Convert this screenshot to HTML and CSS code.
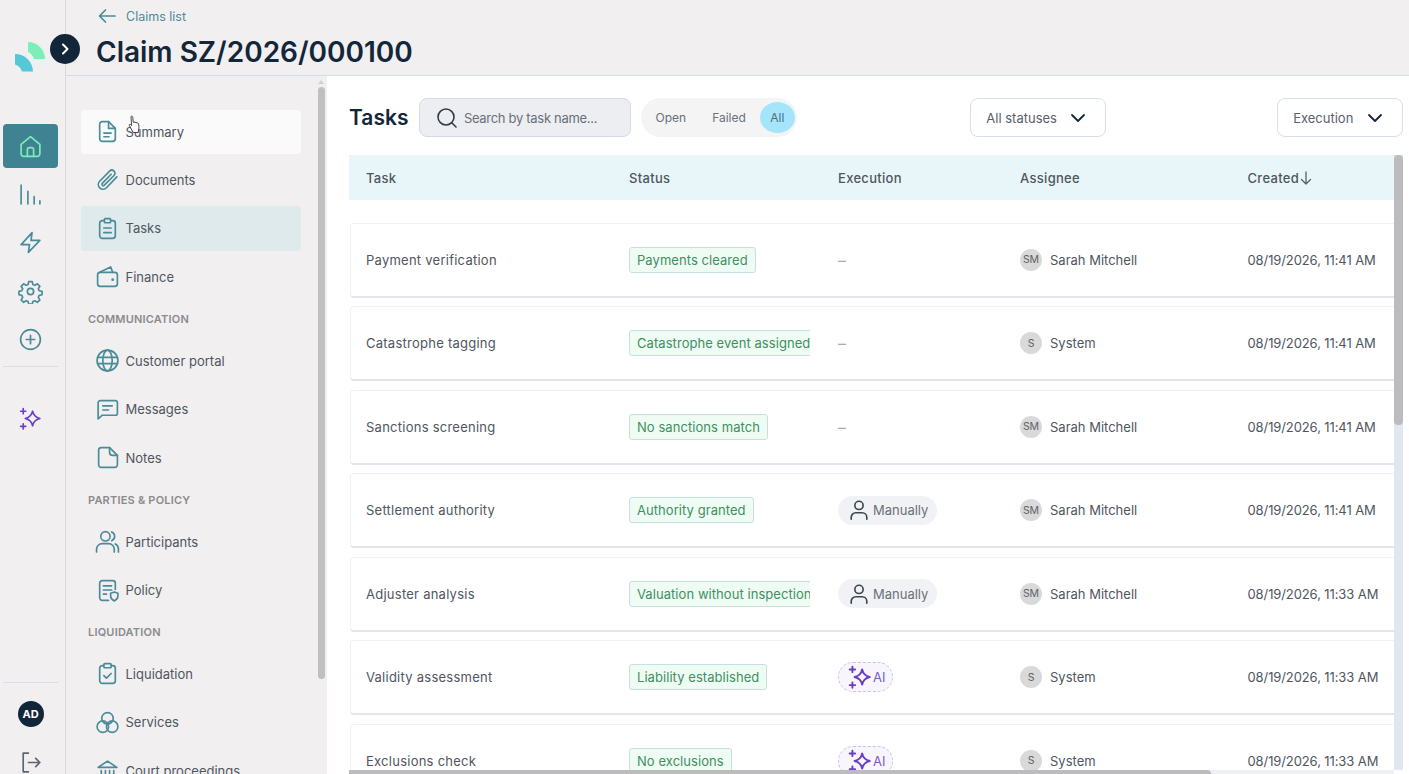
FILE: index.html
```html
<!DOCTYPE html>
<html lang="en">
<head>
    <meta charset="UTF-8">
    <meta name="viewport" content="width=device-width, initial-scale=1.0">
    <title>Claim SZ/2026/000100</title>
    <link rel="stylesheet" href="styles.css">
</head>
<body>

<!-- Icon rail -->
<aside class="rail">
    <div class="logo">
        <svg width="32" height="32" viewBox="0 0 32 32">
            <path fill="#7eeeb8" d="M13 1A17 17 0 0 1 30 18H19C18 15 16 12 13 11Z"/>
            <path fill="#55c8d8" d="M0 13A18 18 0 0 1 18 30.500H7C6 27 3 24.500 0 23.500Z"/>
        </svg>
    </div>
    <a class="rail-item active" href="#">
        <svg class="ico" viewBox="0 0 24 24"><path d="M3 10 12 2.500 21 10v9a2.500 2.500 0 0 1-2.500 2.500h-13A2.500 2.500 0 0 1 3 19Z"/><path d="M9 21.500V15a2 2 0 0 1 2-2h2a2 2 0 0 1 2 2v6.500"/></svg>
    </a>
    <a class="rail-item" href="#">
        <svg class="ico" viewBox="0 0 24 24"><path d="M3 3v18M9.500 9v12M15.500 14v7M21 18v3"/></svg>
    </a>
    <a class="rail-item" href="#">
        <svg class="ico" viewBox="0 0 24 24"><path d="M13.500 2.500 3 14h8l-1 7.500L21 10h-8.500Z"/></svg>
    </a>
    <a class="rail-item" href="#">
        <svg class="ico" viewBox="0 0 24 24"><circle cx="12" cy="12" r="3"/><path d="M10.300 2.500h3.400l.6 2.800 1.900.8 2.400-1.500 2.400 2.400-1.500 2.400.8 1.900 2.800.6v3.200l-2.800.6-.8 1.900 1.500 2.400-2.400 2.400-2.400-1.500-1.900.8-.6 2.300h-3.400l-.6-2.300-1.900-.8-2.400 1.500-2.400-2.400 1.500-2.400-.8-1.900-2.800-.6v-3.200l2.800-.6.8-1.900-1.500-2.400 2.400-2.400 2.400 1.500 1.900-.8Z"/></svg>
    </a>
    <a class="rail-item" href="#">
        <svg class="ico" viewBox="0 0 24 24"><circle cx="12" cy="12" r="9.500"/><path d="M12 8v8M8 12h8"/></svg>
    </a>
    <div class="rail-line"></div>
    <a class="rail-item ai" href="#">
        <svg class="ico purple" viewBox="0 0 24 24"><path d="M14 5c.8 4 2.600 6 7 7-4.400 1-6.200 3-7 7-.8-4-2.600-6-7-7 4.400-1 6.200-3 7-7Z"/><path d="M5 2.500v5M2.500 5h5M5 17v5M2.500 19.500h5"/></svg>
    </a>
    <div class="rail-bottom">
        <div class="rail-line"></div>
        <div class="avatar-me">AD</div>
        <a class="rail-item logout" href="#">
            <svg class="ico grey" viewBox="0 0 24 24"><path d="M10 3H5v18h5M10 12h11M17 8l4 4-4 4"/></svg>
        </a>
    </div>
</aside>

<button class="rail-toggle">
    <svg width="14" height="14" viewBox="0 0 14 14"><path d="M5 2.500 9.500 7 5 11.500"/></svg>
</button>

<div class="main">
    <header class="top">
        <a class="back" href="#">
            <svg width="20" height="16" viewBox="0 0 20 16"><path d="M18 8H3M8.500 2 2.500 8l6 6"/></svg>
            Claims list
        </a>
        <h1>Claim SZ/2026/000100</h1>
    </header>

    <div class="body-row">
        <!-- Section menu -->
        <nav class="menu">
            <a class="menu-item hover" href="#">
                <svg class="ico" viewBox="0 0 24 24"><path d="M13 2.500H7a2.500 2.500 0 0 0-2.500 2.500v14A2.500 2.500 0 0 0 7 21.500h10a2.500 2.500 0 0 0 2.500-2.500V9Z"/><path d="M13 2.500V9h6.500M8.500 13.500h7M8.500 17h5"/></svg>
                Summary
            </a>
            <a class="menu-item" href="#">
                <svg class="ico" viewBox="0 0 24 24"><path d="M21 8.500 11 19a4.500 4.500 0 0 1-6.500-6.300L14 3a3 3 0 0 1 4.300 4.200L9 16.500a1.300 1.300 0 0 1-2-1.800L15.500 6"/></svg>
                Documents
            </a>
            <a class="menu-item current" href="#">
                <svg class="ico" viewBox="0 0 24 24"><path d="M9 4.500H7A2.500 2.500 0 0 0 4.500 7v12A2.500 2.500 0 0 0 7 21.500h10a2.500 2.500 0 0 0 2.500-2.500V7A2.500 2.500 0 0 0 17 4.500h-2"/><rect x="9" y="2.500" width="6" height="4" rx="1"/><path d="M8.500 11.500h7M8.500 16h7"/></svg>
                Tasks
            </a>
            <a class="menu-item" href="#">
                <svg class="ico" viewBox="0 0 24 24"><path d="M4.500 8 15 2.800 17 8"/><rect x="2.500" y="8" width="19" height="13.500" rx="2.500"/><circle cx="17" cy="15" r=".6"/></svg>
                Finance
            </a>
            <div class="menu-label">COMMUNICATION</div>
            <a class="menu-item" href="#">
                <svg class="ico" viewBox="0 0 24 24"><circle cx="12" cy="12" r="10"/><ellipse cx="12" cy="12" rx="4.500" ry="10"/><path d="M2.500 9h19M2.500 15h19"/></svg>
                Customer portal
            </a>
            <a class="menu-item" href="#">
                <svg class="ico" viewBox="0 0 24 24"><path d="M5 3.500h14.500A2 2 0 0 1 21.500 5.500v10a2 2 0 0 1-2 2H7L3 21V5.500a2 2 0 0 1 2-2Z"/><path d="M7.500 8.500h9M7.500 12.500h5.500"/></svg>
                Messages
            </a>
            <a class="menu-item" href="#">
                <svg class="ico" viewBox="0 0 24 24"><path d="M6 2.500h8L21.500 10v9a2.500 2.500 0 0 1-2.500 2.500H6A2.500 2.500 0 0 1 3.500 19V5A2.500 2.500 0 0 1 6 2.500Z"/><path d="M14 2.500V7a3 3 0 0 0 3 3h4.500"/></svg>
                Notes
            </a>
            <div class="menu-label">PARTIES &amp; POLICY</div>
            <a class="menu-item" href="#">
                <svg class="ico" viewBox="0 0 24 24"><circle cx="10" cy="7" r="4.500"/><path d="M1.500 22v-2.500A5.500 5.500 0 0 1 7 14h6a5.500 5.500 0 0 1 5.500 5.500V22M16 2.800a4.500 4.500 0 0 1 0 8.400M19.500 14.300a5.500 5.500 0 0 1 3 5V22"/></svg>
                Participants
            </a>
            <a class="menu-item" href="#">
                <svg class="ico" viewBox="0 0 24 24"><path d="M19.500 11V5A2.500 2.500 0 0 0 17 2.500H7A2.500 2.500 0 0 0 4.500 5v14A2.500 2.500 0 0 0 7 21.500h6"/><path d="M8 7.500h8M8 11.500h8M8 15.500h3"/><path d="M18.500 13.500l3.500 1.200v2.800c0 2-1.500 3.500-3.500 4.500-2-1-3.500-2.500-3.500-4.500v-2.800Z"/></svg>
                Policy
            </a>
            <div class="menu-label">LIQUIDATION</div>
            <a class="menu-item" href="#">
                <svg class="ico" viewBox="0 0 24 24"><path d="M8.500 4.500H7A2.500 2.500 0 0 0 4.500 7v12A2.500 2.500 0 0 0 7 21.500h10a2.500 2.500 0 0 0 2.500-2.500V7A2.500 2.500 0 0 0 17 4.500h-1.500"/><rect x="8.500" y="2.500" width="7" height="4" rx="1"/><path d="m8.500 14 2.500 2.500 4.500-4.500"/></svg>
                Liquidation
            </a>
            <a class="menu-item" href="#">
                <svg class="ico" viewBox="0 0 24 24"><circle cx="12" cy="8" r="5.500"/><circle cx="7.500" cy="16" r="5.500"/><circle cx="16.500" cy="16" r="5.500"/></svg>
                Services
            </a>
            <a class="menu-item" href="#">
                <svg class="ico" viewBox="0 0 24 24"><path d="M3 9 12 3l9 6ZM3 21.500h18M6 12v6M10 12v6M14 12v6M18 12v6"/></svg>
                Court proceedings
            </a>
            <div class="menu-arrow"></div>
            <div class="menu-thumb"></div>
            <!-- mouse pointer in the recording -->
            <svg class="pointer" width="14" height="20" viewBox="0 0 14 20"><path fill="#fff" stroke="#333" stroke-width=".9" d="M3 1.500c.8-.8 1.700 0 1.800.8l.4 5 .8-.2 1 .1 1 .3 1.100.3 1.300.8c.8 1.700.6 4.300.2 6.400l-.3 2.500H5.200L1.300 10.500c-.5-1 .5-1.500 1.300-.9l1 1Z"/></svg>
        </nav>

        <!-- Tasks -->
        <section class="content">
            <div class="toolbar">
                <h2>Tasks</h2>
                <div class="search">
                    <svg width="22" height="22" viewBox="0 0 22 22"><circle cx="10" cy="10" r="8"/><path d="m16 16 4 4"/></svg>
                    <span>Search by task name...</span>
                </div>
                <div class="pills">
                    <span>Open</span>
                    <span>Failed</span>
                    <span class="on">All</span>
                </div>
                <div class="select first">All statuses
                    <svg width="16" height="16" viewBox="0 0 16 16"><path d="m2 5 6 6 6-6"/></svg>
                </div>
                <div class="select second">Execution
                    <svg width="16" height="16" viewBox="0 0 16 16"><path d="m2 5 6 6 6-6"/></svg>
                </div>
            </div>

            <div class="table-wrap">
                <div class="table-head row-grid">
                    <div>Task</div>
                    <div>Status</div>
                    <div>Execution</div>
                    <div>Assignee</div>
                    <div class="created">Created
                        <svg width="12" height="14" viewBox="0 0 12 14"><path d="M6 1v12M1.500 8.500 6 13l4.500-4.500"/></svg>
                    </div>
                </div>

                <div class="rows">
                    <div class="card row-grid">
                        <div class="task">Payment verification</div>
                        <div class="status-cell"><span class="status">Payments cleared</span></div>
                        <div class="none">–</div>
                        <div class="who"><span class="avatar">SM</span>Sarah Mitchell</div>
                        <div class="date">08/19/2026, 11:41 AM</div>
                    </div>
                    <div class="card row-grid">
                        <div class="task">Catastrophe tagging</div>
                        <div class="status-cell"><span class="status">Catastrophe event assigned</span></div>
                        <div class="none">–</div>
                        <div class="who"><span class="avatar">S</span>System</div>
                        <div class="date">08/19/2026, 11:41 AM</div>
                    </div>
                    <div class="card row-grid">
                        <div class="task">Sanctions screening</div>
                        <div class="status-cell"><span class="status">No sanctions match</span></div>
                        <div class="none">–</div>
                        <div class="who"><span class="avatar">SM</span>Sarah Mitchell</div>
                        <div class="date">08/19/2026, 11:41 AM</div>
                    </div>
                    <div class="card row-grid">
                        <div class="task">Settlement authority</div>
                        <div class="status-cell"><span class="status">Authority granted</span></div>
                        <div><span class="manual"><svg viewBox="0 0 24 24"><circle cx="12" cy="7" r="4.500"/><path d="M3.500 22v-2a5 5 0 0 1 5-5h7a5 5 0 0 1 5 5v2"/></svg>Manually</span></div>
                        <div class="who"><span class="avatar">SM</span>Sarah Mitchell</div>
                        <div class="date">08/19/2026, 11:41 AM</div>
                    </div>
                    <div class="card row-grid">
                        <div class="task">Adjuster analysis</div>
                        <div class="status-cell"><span class="status">Valuation without inspection</span></div>
                        <div><span class="manual"><svg viewBox="0 0 24 24"><circle cx="12" cy="7" r="4.500"/><path d="M3.500 22v-2a5 5 0 0 1 5-5h7a5 5 0 0 1 5 5v2"/></svg>Manually</span></div>
                        <div class="who"><span class="avatar">SM</span>Sarah Mitchell</div>
                        <div class="date">08/19/2026, 11:33 AM</div>
                    </div>
                    <div class="card row-grid">
                        <div class="task">Validity assessment</div>
                        <div class="status-cell"><span class="status">Liability established</span></div>
                        <div><span class="ai-chip"><svg viewBox="0 0 24 24"><path d="M14 5c.8 4 2.600 6 7 7-4.400 1-6.200 3-7 7-.8-4-2.600-6-7-7 4.400-1 6.200-3 7-7Z"/><path d="M5 2.500v5M2.500 5h5M5 17v5M2.500 19.500h5"/></svg>AI</span></div>
                        <div class="who"><span class="avatar">S</span>System</div>
                        <div class="date">08/19/2026, 11:33 AM</div>
                    </div>
                    <div class="card row-grid">
                        <div class="task">Exclusions check</div>
                        <div class="status-cell"><span class="status">No exclusions</span></div>
                        <div><span class="ai-chip"><svg viewBox="0 0 24 24"><path d="M14 5c.8 4 2.600 6 7 7-4.400 1-6.200 3-7 7-.8-4-2.600-6-7-7 4.400-1 6.200-3 7-7Z"/><path d="M5 2.500v5M2.500 5h5M5 17v5M2.500 19.500h5"/></svg>AI</span></div>
                        <div class="who"><span class="avatar">S</span>System</div>
                        <div class="date">08/19/2026, 11:33 AM</div>
                    </div>
                </div>

                <div class="vbar"><div class="vthumb"></div></div>
                <div class="hbar"><div class="hthumb"></div></div>
            </div>
        </section>
    </div>
</div>

</body>
</html>
```

FILE: styles.css
```css
* {
    box-sizing: border-box;
}
body {
    font-family: Inter, "Open Sans", sans-serif;
    font-size: 13px;
    margin: 0;
    height: 100vh;
    display: flex;
    overflow: hidden;
    background-color: #f1eff0;
    color: #4f5660;
}
a {
    text-decoration: none;
    color: inherit;
}
.ico {
    width: 25px;
    height: 25px;
    fill: none;
    stroke: #4a8b99;
    stroke-width: 1.6;
    stroke-linecap: round;
    stroke-linejoin: round;
    flex: none;
}
.ico.purple {
    stroke: #6a3fc8;
}
.ico.grey {
    stroke: #5b6672;
}

/* rail */
.rail {
    width: 66px;
    flex: none;
    border-right: 1px solid #d4dbe4;
    padding: 41px 7px 0 3px;
    display: flex;
    flex-direction: column;
}
.logo {
    height: 32px;
    padding-left: 12px;
    margin-bottom: 51px;
}
.rail-item {
    height: 44.4px;
    margin-bottom: 4px;
    border-radius: 4px;
    display: flex;
    align-items: center;
    justify-content: center;
}
.rail-item.active {
    background-color: #3f8291;
}
.rail-item.active .ico {
    stroke: #7eeeb8;
}
.rail-item.ai {
    margin-top: 29px;
}
.rail-line {
    height: 1px;
    margin-top: 0;
    background-color: #d9dfe6;
}
.rail-bottom {
    margin-top: auto;
    display: flex;
    flex-direction: column;
}
.avatar-me {
    width: 26px;
    height: 26px;
    border-radius: 50%;
    margin: 18px auto 14px;
    background-color: #12263a;
    color: #fff;
    font-size: 11px;
    font-weight: 700;
    display: flex;
    align-items: center;
    justify-content: center;
}
.logout {
    margin-bottom: -11px;
}
.rail-toggle {
    position: absolute;
    left: 50px;
    top: 34px;
    width: 30px;
    height: 30px;
    border: 0;
    padding: 0;
    border-radius: 50%;
    background-color: #12263a;
    display: flex;
    align-items: center;
    justify-content: center;
}
.rail-toggle svg {
    fill: none;
    stroke: #fff;
    stroke-width: 2;
    stroke-linecap: round;
    stroke-linejoin: round;
}

/* header */
.main {
    flex: 1;
    min-width: 0;
    display: flex;
    flex-direction: column;
}
.top {
    height: 76px;
    flex: none;
    border-bottom: 1px solid #d4dbe4;
    padding: 7px 0 0 30px;
}
.back {
    display: flex;
    align-items: center;
    gap: 9px;
    height: 18px;
    margin-left: 1px;
    color: #4f8b98;
    font-size: 12.5px;
}
.back svg {
    fill: none;
    stroke: #4a8b99;
    stroke-width: 1.7;
    stroke-linecap: round;
    stroke-linejoin: round;
}
.top h1 {
    margin: 9px 0 0;
    font-size: 28px;
    line-height: 36px;
    font-weight: 600;
    color: #13263a;
}

/* section menu */
.body-row {
    flex: 1;
    min-height: 0;
    display: flex;
}
.menu {
    width: 261px;
    flex: none;
    position: relative;
    overflow: hidden;
    padding: 33.500px 26px 0 15px;
    display: flex;
    flex-direction: column;
    gap: 4px;
}
.menu-item {
    height: 44.4px;
    flex: none;
    border-radius: 4px;
    padding-left: 13.500px;
    display: flex;
    align-items: center;
    gap: 6px;
}
.menu-item.hover {
    background-color: #fafafa;
}
.menu-item.current {
    background-color: #deeaec;
}
.menu-label {
    height: 31.600px;
    flex: none;
    padding-left: 7px;
    display: flex;
    align-items: center;
    font-size: 11px;
    font-weight: 600;
    letter-spacing: .2px;
    color: #8b8b8e;
}
.menu-thumb {
    position: absolute;
    left: 252px;
    top: 11px;
    width: 7px;
    height: 592px;
    border-radius: 4px;
    background-color: #c0c0c2;
}
.menu-arrow {
    position: absolute;
    left: 252px;
    top: 4px;
    border: 3.500px solid transparent;
    border-top: 0;
    border-bottom: 4px solid #cfcfd1;
}
.pointer {
    position: absolute;
    left: 62px;
    top: 39px;
}

/* content */
.content {
    flex: 1;
    min-width: 0;
    background-color: #fff;
    padding: 22px 6px 0 22px;
    display: flex;
    flex-direction: column;
}
.toolbar {
    display: flex;
    align-items: center;
    height: 39px;
    flex: none;
}
.toolbar h2 {
    margin: 0;
    width: 70px;
    font-size: 21px;
    font-weight: 600;
    color: #13263a;
}
.search {
    width: 212px;
    height: 39px;
    border: 1px solid #d5dbe3;
    border-radius: 8px;
    background-color: #eceef1;
    padding-left: 16px;
    display: flex;
    align-items: center;
    gap: 6px;
    letter-spacing: -.3px;
    color: #6a7079;
}
.search svg {
    fill: none;
    stroke: #333b44;
    stroke-width: 1.6;
    stroke-linecap: round;
}
.pills {
    width: 157px;
    height: 39px;
    margin-left: 10px;
    border-radius: 20px;
    background-color: #f4f4f5;
    padding-left: 15px;
    display: flex;
    align-items: center;
    font-size: 12px;
    color: #6a7079;
}
.pills span:nth-child(2) {
    margin-left: 26px;
}
.pills .on {
    width: 35px;
    height: 31px;
    margin-left: 14px;
    border-radius: 50%;
    background-color: #a5e5fb;
    color: #4a6f80;
    display: flex;
    align-items: center;
    justify-content: center;
}
.select {
    height: 39px;
    border: 1px solid #d8dfe7;
    border-radius: 8px;
    display: flex;
    align-items: center;
    justify-content: space-between;
    padding: 0 19px 0 15px;
    color: #5a6069;
}
.select svg {
    fill: none;
    stroke: #13263a;
    stroke-width: 1.8;
    stroke-linecap: round;
    stroke-linejoin: round;
}
.select.first {
    width: 136px;
    margin-left: 173px;
}
.select.second {
    width: 126px;
    margin-left: 171px;
}

/* table */
.table-wrap {
    flex: 1;
    min-height: 0;
    position: relative;
    overflow: hidden;
    margin-top: 18px;
}
.row-grid {
    width: 1045px;
    padding-left: 16px;
    display: grid;
    grid-template-columns: 263px 209px 182px 227.500px 1fr;
    align-items: center;
    white-space: nowrap;
}
.table-head {
    height: 45px;
    padding-left: 17px;
    background-color: #e9f6f9;
    font-weight: 500;
    letter-spacing: .3px;
    color: #4f5660;
}
.created {
    display: flex;
    align-items: center;
    gap: 1px;
}
.created svg {
    fill: none;
    stroke: #5a6069;
    stroke-width: 1.3;
    stroke-linecap: round;
    stroke-linejoin: round;
}
.rows {
    padding-top: 22.500px;
    display: flex;
    flex-direction: column;
    gap: 8.500px;
}
.card {
    height: 75px;
    flex: none;
    margin-left: 1px;
    width: 1044px;
    padding-left: 15px;
    border-top: 1px solid #f1f1f5;
    border-bottom: 2px solid #e3e4ec;
    border-left: 1px solid #f1f1f5;
    border-radius: 4px 0 0 4px;
    background-color: #fff;
}
.task {
    letter-spacing: .25px;
}
.date {
    letter-spacing: -.1px;
}
.status-cell {
    max-width: 181px;
    overflow: hidden;
}
.status {
    display: inline-block;
    height: 26px;
    line-height: 24px;
    padding: 0 7px;
    border: 1px solid #c8dfe0;
    border-radius: 3px;
    background-color: #effcf4;
    color: #3f8f63;
    letter-spacing: .06px;
    vertical-align: middle;
}
.none {
    font-size: 16px;
    color: #a9adb3;
}
.who {
    display: flex;
    align-items: center;
    gap: 8px;
}
.avatar {
    width: 22px;
    height: 22px;
    border-radius: 50%;
    background-color: #d9d9d9;
    color: #5f6368;
    font-size: 10.500px;
    display: flex;
    align-items: center;
    justify-content: center;
}
.manual,
.ai-chip {
    display: inline-flex;
    align-items: center;
    height: 29px;
    border-radius: 15px;
    vertical-align: middle;
}
.manual {
    width: 99px;
    gap: 3px;
    padding-left: 10px;
    background-color: #f1f2f5;
    color: #6a7079;
}
.manual svg {
    width: 22px;
    height: 22px;
    fill: none;
    stroke: #3c4650;
    stroke-width: 1.800;
    stroke-linecap: round;
}
.ai-chip {
    width: 55px;
    height: 30px;
    padding-left: 8px;
    border: 1px dashed #cfc0ec;
    background-color: #f8f5fd;
    color: #7a5cc9;
}
.ai-chip svg {
    width: 26px;
    height: 26px;
    fill: none;
    stroke: #6a3fc8;
    stroke-width: 1.800;
    stroke-linecap: round;
    stroke-linejoin: round;
}
.vbar {
    position: absolute;
    left: 1045px;
    top: 0;
    bottom: 4px;
    width: 9px;
    background-color: #e2e6f0;
}
.vthumb {
    height: 270px;
    border-radius: 4px;
    background-color: #bcbcbe;
}
.hbar {
    position: absolute;
    left: 0;
    bottom: 0;
    width: 1045px;
    height: 4px;
    background-color: #eef0f5;
}
.hthumb {
    width: 862px;
    height: 4px;
    border-radius: 0 4px 0 0;
    background-color: #bcbcbe;
}
```
